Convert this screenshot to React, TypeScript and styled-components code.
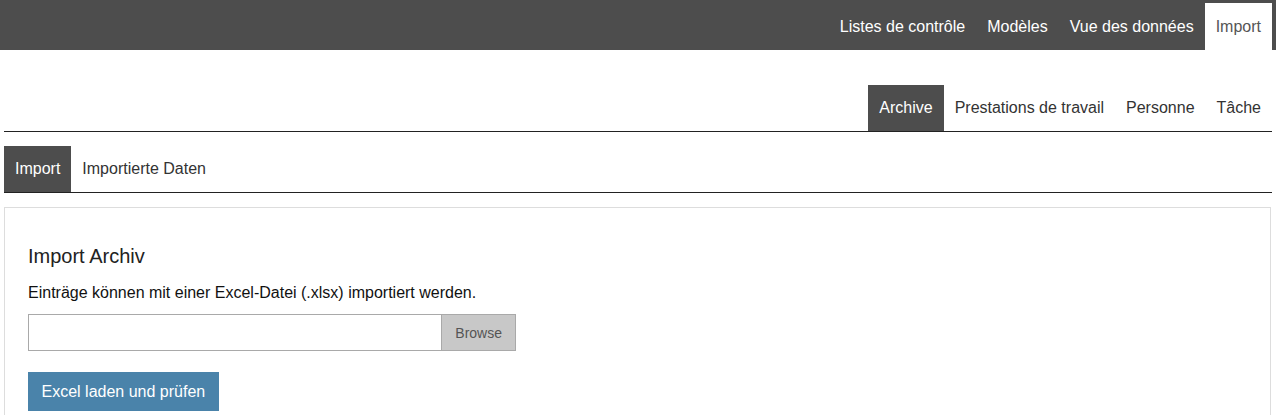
import React from 'react'
import styled, { createGlobalStyle } from 'styled-components'

const GlobalStyle = createGlobalStyle`
  html, body {
    margin: 0;
    padding: 0;
    background: #fff;
    font-family: "Liberation Sans", Arial, sans-serif;
    color: #222;
  }
  * { box-sizing: border-box; }
`

const TopBar = styled.div`
  display: flex;
  justify-content: flex-end;
  align-items: flex-end;
  height: 50px;
  padding-right: 4px;
  background-color: #4d4d4d;
`

const TopItem = styled.a<{ $active?: boolean }>`
  display: block;
  height: 47px;
  line-height: 47px;
  padding: 0 11px;
  font-size: 16px;
  text-decoration: none;
  color: ${(p) => (p.$active ? '#555' : '#fff')};
  background-color: ${(p) => (p.$active ? '#fff' : 'transparent')};
`

const Container = styled.div`
  padding: 0 4px;
`

const TabRow = styled.div<{ $align: 'start' | 'end'; $top: number }>`
  display: flex;
  justify-content: ${(p) => (p.$align === 'end' ? 'flex-end' : 'flex-start')};
  margin-top: ${(p) => p.$top}px;
  border-bottom: 1px solid #222;
`

const Tab = styled.a<{ $active?: boolean }>`
  display: block;
  padding: 13px 11px;
  line-height: 20px;
  font-size: 16px;
  text-decoration: none;
  color: ${(p) => (p.$active ? '#fff' : '#333')};
  background-color: ${(p) => (p.$active ? '#4d4d4d' : 'transparent')};
`

const Panel = styled.div`
  margin-top: 14px;
  margin-right: 1px;
  border: 1px solid #dddddd;
  border-bottom: none;
  padding: 0 23px 24px;
`

const Heading = styled.h3`
  margin: 37px 0 0;
  font-size: 20px;
  line-height: 22px;
  font-weight: normal;
  color: #222;
`

const Text = styled.p`
  margin: 15.5px 0 0;
  font-size: 16px;
  line-height: 20px;
  color: #111;
`

const FileInput = styled.div`
  display: flex;
  width: 488px;
  height: 37px;
  margin-top: 11.5px;
  border: 1px solid #a9a9a9;
`

const FileName = styled.div`
  flex: 1;
  background: #fff;
`

const BrowseButton = styled.div`
  display: flex;
  align-items: center;
  padding: 0 13px;
  font-size: 14px;
  color: #555;
  background-color: #c8c8c8;
  border-left: 1px solid #a9a9a9;
`

const PrimaryButton = styled.button`
  display: block;
  margin-top: 21px;
  height: 39px;
  padding: 0 13.5px;
  border: none;
  font-family: inherit;
  font-size: 16px;
  color: #fff;
  background-color: #4a83aa;
  cursor: pointer;
`

const App = () => {
  return (
    <>
      <GlobalStyle />
      <TopBar>
        <TopItem>Listes de contrôle</TopItem>
        <TopItem>Modèles</TopItem>
        <TopItem>Vue des données</TopItem>
        <TopItem $active>Import</TopItem>
      </TopBar>
      <Container>
        <TabRow $align="end" $top={35}>
          <Tab $active>Archive</Tab>
          <Tab>Prestations de travail</Tab>
          <Tab>Personne</Tab>
          <Tab>Tâche</Tab>
        </TabRow>
        <TabRow $align="start" $top={14}>
          <Tab $active>Import</Tab>
          <Tab>Importierte Daten</Tab>
        </TabRow>
        <Panel>
          <Heading>Import Archiv</Heading>
          <Text>Einträge können mit einer Excel-Datei (.xlsx) importiert werden.</Text>
          <FileInput>
            <FileName />
            <BrowseButton>Browse</BrowseButton>
          </FileInput>
          <PrimaryButton>Excel laden und prüfen</PrimaryButton>
        </Panel>
      </Container>
    </>
  )
}

export default App
